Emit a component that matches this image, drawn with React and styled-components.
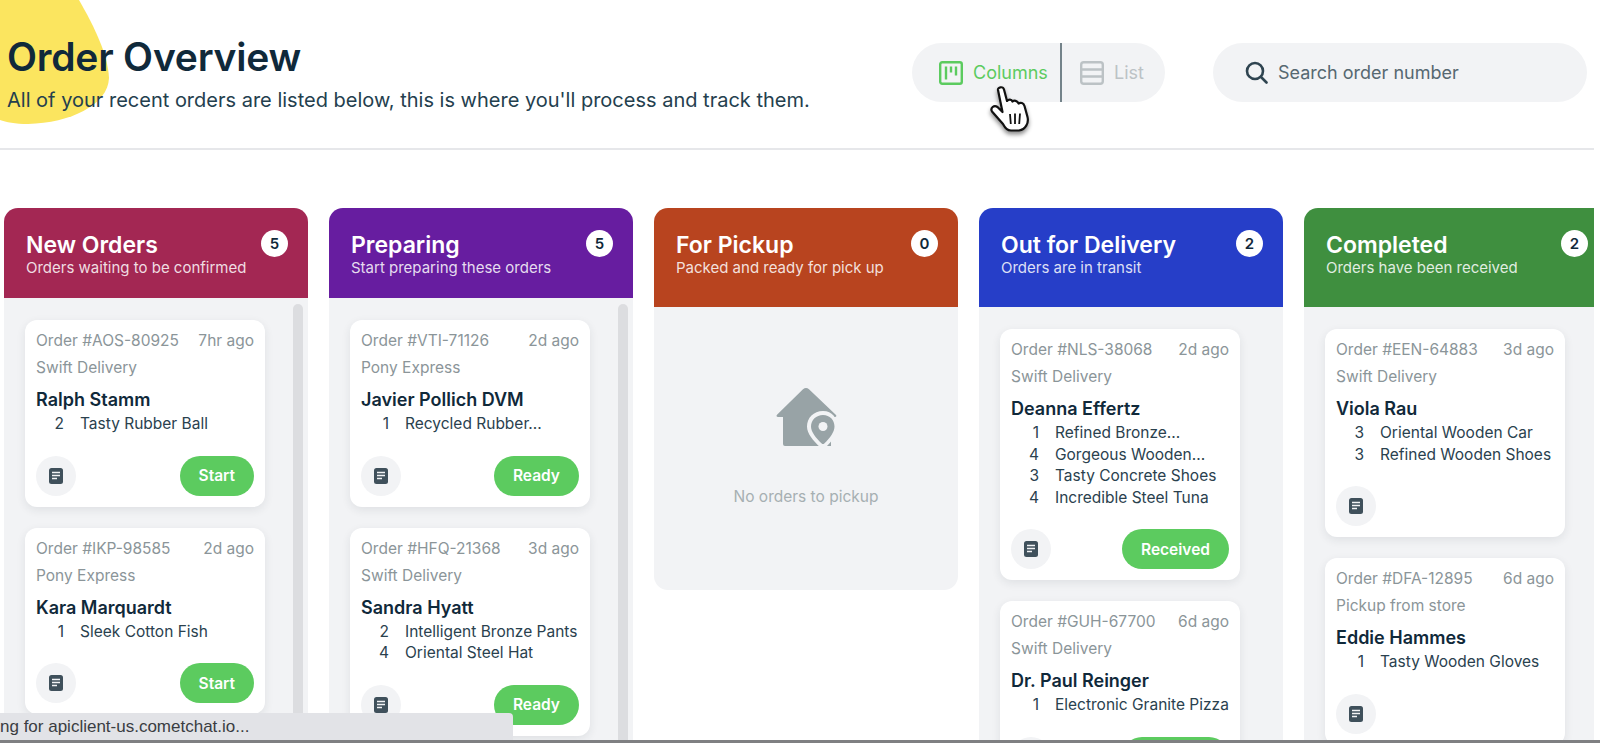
import React from 'react'
import styled, { createGlobalStyle } from 'styled-components'

const GlobalStyle = createGlobalStyle`
  html, body {
    margin: 0;
    height: 100%;
    overflow: hidden;
    background: #ffffff;
  }

  * {
    box-sizing: border-box;
  }
`

const AppWrapper = styled.div`
  position: relative;
  width: 1600px;
  height: 743px;
  overflow: hidden;
  font-family: Inter, "Liberation Sans", sans-serif;
  color: #10293a;
`

const Page = styled.div`
  width: 1594px;
  height: 743px;
  overflow: hidden;
`

const Blob = styled.svg`
  position: absolute;
  top: 0;
  left: 0;
  z-index: 0;
`

const Header = styled.header`
  position: relative;
  z-index: 1;
  height: 150px;
  padding: 33px 7px 0;
  display: flex;
  align-items: flex-start;
  border-bottom: 2px solid #e6e7ea;
`

const TitleBlock = styled.div`
  flex: 1;
`

const Title = styled.h1`
  margin: 0;
  font-size: 39px;
  line-height: 48px;
  font-weight: 600;
  letter-spacing: -0.2px;
  color: #10293a;
`

const Subtitle = styled.p`
  margin: 5px 0 0;
  font-size: 20px;
  line-height: 28px;
  font-weight: 400;
  color: #24404e;
`

const Toggle = styled.div`
  width: 253px;
  height: 59px;
  margin-top: 10px;
  border-radius: 30px;
  background: #f2f3f5;
  display: flex;
`

const ToggleItem = styled.div`
  height: 100%;
  display: flex;
  align-items: center;
  gap: 10px;
  font-size: 18px;
  color: ${({ $active }) => ($active ? '#5ccb5f' : '#bcc2c5')};
  padding-left: ${({ $active }) => ($active ? '27px' : '18px')};
  width: ${({ $active }) => ($active ? '150px' : 'auto')};
  border-right: ${({ $active }) => ($active ? '2px solid #74838a' : 'none')};
`

const SearchBox = styled.div`
  width: 374px;
  height: 59px;
  margin: 10px 0 0 48px;
  padding-left: 32px;
  border-radius: 30px;
  background: #f2f3f5;
  display: flex;
  align-items: center;
  gap: 10px;
  font-size: 18px;
  color: #566871;
`

const Cursor = styled.svg`
  position: absolute;
  left: 990px;
  top: 86px;
  z-index: 3;
  filter: drop-shadow(0 3px 2px rgba(0, 0, 0, 0.45));
`

const Board = styled.main`
  display: flex;
  align-items: flex-start;
  gap: 21px;
  padding: 58px 0 0 4px;
`

const Column = styled.section`
  flex: 0 0 304px;
`

const ColumnHeader = styled.div`
  height: ${({ $short }) => ($short ? '90px' : '99px')};
  padding: 22px 20px 0 22px;
  border-radius: 14px 14px 0 0;
  background: ${({ $color }) => $color};
  display: flex;
  justify-content: space-between;
  align-items: flex-start;
  color: #ffffff;
`

const ColumnTitle = styled.div`
  font-size: 23px;
  line-height: 30px;
  font-weight: 600;
`

const ColumnSubtitle = styled.div`
  margin-top: -2px;
  font-size: 15px;
  line-height: 20px;
  color: rgba(255, 255, 255, 0.85);
`

const Badge = styled.div`
  width: 27px;
  height: 27px;
  border-radius: 50%;
  background: #ffffff;
  color: #10293a;
  font-size: 15px;
  font-weight: 600;
  display: flex;
  align-items: center;
  justify-content: center;
`

const ColumnBody = styled.div`
  position: relative;
  height: 500px;
  padding: 22px 0 0 21px;
  background: #f2f3f5;
  display: flex;
  flex-direction: column;
  gap: 21px;
`

const ScrollThumb = styled.div`
  position: absolute;
  top: 6px;
  right: 5px;
  bottom: 0;
  width: 10px;
  border-radius: 5px;
  background: #dcdde0;
`

const EmptyBody = styled.div`
  height: 283px;
  padding-top: 81px;
  border-radius: 0 0 14px 14px;
  background: #f2f3f5;
  display: flex;
  flex-direction: column;
  align-items: center;
`

const EmptyText = styled.div`
  margin-top: 38px;
  font-size: 15.5px;
  line-height: 20px;
  color: #a6afb2;
`

const Card = styled.article`
  flex: none;
  width: 240px;
  padding: 11px;
  border-radius: 12px;
  background: #ffffff;
  box-shadow: 0 3px 10px rgba(30, 40, 50, 0.09);
`

const MetaRow = styled.div`
  display: flex;
  justify-content: space-between;
  font-size: 15.5px;
  line-height: 20px;
  color: #8b9599;
`

const Shipping = styled.div`
  margin-top: 7px;
  font-size: 15.5px;
  line-height: 20px;
  color: #8b9599;
`

const Customer = styled.div`
  margin-top: 10px;
  font-size: 18px;
  line-height: 24px;
  font-weight: 600;
  color: #10293a;
`

const Items = styled.div`
  margin-top: 1px;
`

const Item = styled.div`
  display: flex;
  font-size: 15.5px;
  line-height: 21.5px;
  color: #2a414e;
  white-space: nowrap;
`

const Quantity = styled.span`
  width: 28px;
  margin-right: 16px;
  text-align: right;
`

const Footer = styled.div`
  margin-top: 21px;
  display: flex;
  justify-content: space-between;
  align-items: center;
`

const NoteButton = styled.div`
  width: 40px;
  height: 40px;
  border-radius: 50%;
  background: #f2f3f5;
  display: flex;
  align-items: center;
  justify-content: center;
`

const ActionButton = styled.div`
  height: 40px;
  padding: 0 19px;
  border-radius: 20px;
  background: #5ccb5f;
  color: #ffffff;
  font-size: 15.5px;
  font-weight: 600;
  display: flex;
  align-items: center;
`

const StatusBar = styled.div`
  position: absolute;
  left: 0;
  bottom: 3px;
  z-index: 4;
  width: 513px;
  height: 27px;
  border-radius: 0 4px 0 0;
  background: #e2e3e7;
  font-family: "Liberation Sans", sans-serif;
  font-size: 17px;
  line-height: 27px;
  color: #3a3d42;
  white-space: nowrap;
`

const BottomLine = styled.div`
  position: absolute;
  left: 0;
  right: 0;
  bottom: 0;
  z-index: 4;
  height: 3px;
  background: #7f8082;
`

const columns = [
  {
    title: 'New Orders',
    subtitle: 'Orders waiting to be confirmed',
    color: '#a32753',
    count: 5,
    short: true,
    scroll: true,
    action: 'Start',
    orders: [
      { id: 'AOS-80925', age: '7hr ago', shipping: 'Swift Delivery', name: 'Ralph Stamm', items: [[2, 'Tasty Rubber Ball']] },
      { id: 'IKP-98585', age: '2d ago', shipping: 'Pony Express', name: 'Kara Marquardt', items: [[1, 'Sleek Cotton Fish']] }
    ]
  },
  {
    title: 'Preparing',
    subtitle: 'Start preparing these orders',
    color: '#671da0',
    count: 5,
    short: true,
    scroll: true,
    action: 'Ready',
    orders: [
      { id: 'VTI-71126', age: '2d ago', shipping: 'Pony Express', name: 'Javier Pollich DVM', items: [[1, 'Recycled Rubber...']] },
      { id: 'HFQ-21368', age: '3d ago', shipping: 'Swift Delivery', name: 'Sandra Hyatt', items: [[2, 'Intelligent Bronze Pants'], [4, 'Oriental Steel Hat']] }
    ]
  },
  {
    title: 'For Pickup',
    subtitle: 'Packed and ready for pick up',
    color: '#b8441f',
    count: 0,
    empty: 'No orders to pickup',
    orders: []
  },
  {
    title: 'Out for Delivery',
    subtitle: 'Orders are in transit',
    color: '#263ec8',
    count: 2,
    action: 'Received',
    orders: [
      {
        id: 'NLS-38068',
        age: '2d ago',
        shipping: 'Swift Delivery',
        name: 'Deanna Effertz',
        items: [[1, 'Refined Bronze...'], [4, 'Gorgeous Wooden...'], [3, 'Tasty Concrete Shoes'], [4, 'Incredible Steel Tuna']]
      },
      { id: 'GUH-67700', age: '6d ago', shipping: 'Swift Delivery', name: 'Dr. Paul Reinger', items: [[1, 'Electronic Granite Pizza']] }
    ]
  },
  {
    title: 'Completed',
    subtitle: 'Orders have been received',
    color: '#3f8f3f',
    count: 2,
    orders: [
      { id: 'EEN-64883', age: '3d ago', shipping: 'Swift Delivery', name: 'Viola Rau', items: [[3, 'Oriental Wooden Car'], [3, 'Refined Wooden Shoes']] },
      { id: 'DFA-12895', age: '6d ago', shipping: 'Pickup from store', name: 'Eddie Hammes', items: [[1, 'Tasty Wooden Gloves']] }
    ]
  }
]

function ColumnsIcon() {
  return (
    <svg width="24" height="24" viewBox="0 0 24 24" fill="none" stroke="#5ccb5f" strokeWidth="2.4">
      <rect x="1.2" y="1.2" width="21.6" height="21.6" rx="2" />
      <path d="M7 5.5v13M12 5.5v6M17 5.5v9" />
    </svg>
  )
}

function ListIcon() {
  return (
    <svg width="24" height="24" viewBox="0 0 24 24" fill="none" stroke="#bcc2c5" strokeWidth="2.4">
      <rect x="1.2" y="1.2" width="21.6" height="21.6" rx="2.5" />
      <path d="M1.5 8.5h21M1.5 15.5h21" />
    </svg>
  )
}

function SearchIcon() {
  return (
    <svg width="23" height="23" viewBox="0 0 23 23" fill="none" stroke="#2f4450" strokeWidth="2.6" strokeLinecap="round">
      <circle cx="10" cy="10" r="8" />
      <path d="M16 16l5.5 5.5" />
    </svg>
  )
}

function NoteIcon() {
  return (
    <svg width="14" height="16" viewBox="0 0 14 16">
      <rect width="14" height="16" rx="2.5" fill="#3f505b" />
      <path d="M3 4.5h8M3 7.5h8M3 10.5h5" stroke="#f2f3f5" strokeWidth="1.3" />
    </svg>
  )
}

function PickupIcon() {
  return (
    <svg width="61" height="61" viewBox="0 0 61 61">
      <path
        d="M30 0c1 0 2 .4 3 1.3L60 27c.8.8.3 2-1 2H55V58H9a2 2 0 0 1-2-2V29H2c-1.400 0-2-1.300-1-2.200L27 1.300C28 .4 29 0 30 0z"
        fill="#98a3a6"
      />
      <path
        d="M47 23c-9.500 0-16 7-16 15.500 0 7 6 14 13.500 21 1.500 1.400 3.500 1.400 5 0C56.500 53 61 46 61 38.500 61 30 56.500 23 47 23z"
        fill="#f2f3f5"
      />
      <path
        d="M47 27c-6.800 0-12 5-12 11.500 0 5.500 5 11.500 10.700 17 .8.800 1.800.800 2.600 0C54 50 58.500 44 58.500 38.500 58.500 32 53.800 27 47 27z"
        fill="#98a3a6"
      />
      <circle cx="47" cy="38.500" r="4.500" fill="#f2f3f5" />
    </svg>
  )
}

function HandCursor() {
  return (
    <Cursor width="40" height="46" viewBox="0 0 40 46">
      <path
        d="M8 4C7.500 1 13 0 14 3.500L17 15C18.500 13 21.500 13 22.500 15.500C24 14 27.500 14.500 28.500 17.500C30.500 16 33.500 17 34.500 20L37.500 31C39 37 35.500 43.500 29 44.500L21 44.500C17 44.500 15 42 13 38L2 25.500C0 22 4 18.500 7.500 21L12.500 26Z"
        fill="#ffffff"
        stroke="#111111"
        strokeWidth="2.2"
        strokeLinejoin="round"
      />
      <path d="M20 28l.8 10M25 27.500v10.500M30 27.500l-.8 10.500" stroke="#111111" strokeWidth="1.800" />
    </Cursor>
  )
}

function OrderCard({ order, action }) {
  return (
    <Card>
      <MetaRow>
        <span>Order #{order.id}</span>
        <span>{order.age}</span>
      </MetaRow>
      <Shipping>{order.shipping}</Shipping>
      <Customer>{order.name}</Customer>
      <Items>
        {order.items.map(([quantity, name]) => (
          <Item key={name}>
            <Quantity>{quantity}</Quantity>
            {name}
          </Item>
        ))}
      </Items>
      <Footer>
        <NoteButton>
          <NoteIcon />
        </NoteButton>
        {action && <ActionButton>{action}</ActionButton>}
      </Footer>
    </Card>
  )
}

export default function App() {
  return (
    <AppWrapper>
      <GlobalStyle />
      <Blob width="110" height="124" viewBox="0 0 110 124">
        <path d="M0 0H79C95 28 108 55 109 78C108 105 70 123 28 124C15 124 6 122 0 120Z" fill="#fbe55f" />
      </Blob>
      <Page>
        <Header>
          <TitleBlock>
            <Title>Order Overview</Title>
            <Subtitle>All of your recent orders are listed below, this is where you'll process and track them.</Subtitle>
          </TitleBlock>
          <Toggle>
            <ToggleItem $active>
              <ColumnsIcon />
              Columns
            </ToggleItem>
            <ToggleItem>
              <ListIcon />
              List
            </ToggleItem>
          </Toggle>
          <SearchBox>
            <SearchIcon />
            Search order number
          </SearchBox>
        </Header>
        <Board>
          {columns.map((column) => (
            <Column key={column.title}>
              <ColumnHeader $color={column.color} $short={column.short}>
                <div>
                  <ColumnTitle>{column.title}</ColumnTitle>
                  <ColumnSubtitle>{column.subtitle}</ColumnSubtitle>
                </div>
                <Badge>{column.count}</Badge>
              </ColumnHeader>
              {column.empty ? (
                <EmptyBody>
                  <PickupIcon />
                  <EmptyText>{column.empty}</EmptyText>
                </EmptyBody>
              ) : (
                <ColumnBody>
                  {column.scroll && <ScrollThumb />}
                  {column.orders.map((order) => (
                    <OrderCard key={order.id} order={order} action={column.action} />
                  ))}
                </ColumnBody>
              )}
            </Column>
          ))}
        </Board>
      </Page>
      <HandCursor />
      <StatusBar>ng for apiclient-us.cometchat.io...</StatusBar>
      <BottomLine />
    </AppWrapper>
  )
}
